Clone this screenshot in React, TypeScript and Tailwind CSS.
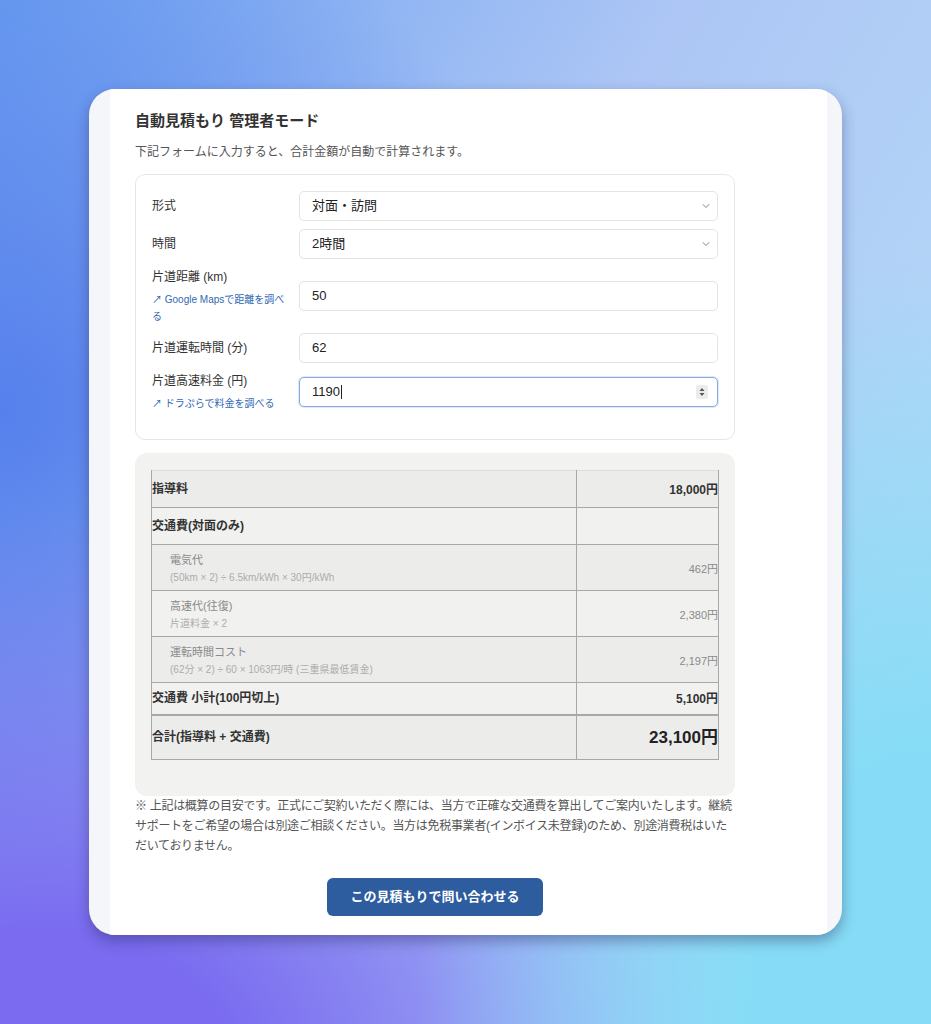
import { ChevronDown } from "lucide-react";

const font = "font-['Liberation_Sans','Noto_Sans_CJK_JP',sans-serif]";

const fields = [
  { label: "形式", kind: "select", value: "対面・訪問" },
  { label: "時間", kind: "select", value: "2時間" },
  { label: "片道距離 (km)", kind: "input", value: "50", link: "↗ Google Mapsで距離を調べる" },
  { label: "片道運転時間 (分)", kind: "input", value: "62" },
  { label: "片道高速料金 (円)", kind: "focus", value: "1190", link: "↗ ドラぷらで料金を調べる" },
];

const rows = [
  { label: "指導料", value: "18,000円", type: "main" },
  { label: "交通費(対面のみ)", value: "", type: "main" },
  { label: "電気代", sub: "(50km × 2) ÷ 6.5km/kWh × 30円/kWh", value: "462円", type: "sub" },
  { label: "高速代(往復)", sub: "片道料金 × 2", value: "2,380円", type: "sub" },
  { label: "運転時間コスト", sub: "(62分 × 2) ÷ 60 × 1063円/時 (三重県最低賃金)", value: "2,197円", type: "sub" },
  { label: "交通費 小計(100円切上)", value: "5,100円", type: "subtotal" },
  { label: "合計(指導料 + 交通費)", value: "23,100円", type: "total" },
];

function Field({ f }: { f: (typeof fields)[number] }) {
  const base =
    "relative h-[30px] w-full rounded-[5px] border bg-white flex items-center pl-3 text-[13px] text-[#222]";
  if (f.kind === "select") {
    return (
      <div className={`${base} pr-[5px] border-[#e3e3e0] justify-between`}>
        <span>{f.value}</span>
        <ChevronDown className="w-3 h-3 text-[#777]" strokeWidth={1.8} />
      </div>
    );
  }
  if (f.kind === "focus") {
    return (
      <div className={`${base} pr-[9px] border-[#86a9de] shadow-[0_0_0_1px_rgba(134,169,222,0.25)] justify-between`}>
        <span className="flex items-center">
          {f.value}
          <span className="ml-[1px] inline-block w-px h-[14px] bg-[#222]" />
        </span>
        <span className="flex items-center justify-center w-[12px] h-[14px] rounded-[2px] bg-[#ececec]">
          <svg width="6" height="10" viewBox="0 0 6 10">
            <path d="M3 1 L5.5 4 H0.5 Z" fill="#555" />
            <path d="M3 9 L5.5 6 H0.5 Z" fill="#555" />
          </svg>
        </span>
      </div>
    );
  }
  return (
    <div className={`${base} pr-3 border-[#e3e3e0]`}>
      <span>{f.value}</span>
    </div>
  );
}

export default function App() {
  return (
    <div
      className={`${font} min-h-[1024px] w-full bg-[radial-gradient(ellipse_55%_75%_at_100%_100%,#86dcf6_0%,#86dcf6_35%,transparent_100%),radial-gradient(ellipse_80%_55%_at_5%_105%,#7a6bf0_0%,#7a6bf0_25%,transparent_100%),radial-gradient(ellipse_60%_55%_at_0%_40%,#5680ec_0%,transparent_100%),linear-gradient(120deg,#6a9ff0_0%,#adc6f5_45%,#b8e1f8_100%)] pt-[89px] pl-[89px]`}
    >
      <div className="w-[753px] h-[846px] rounded-[26px] bg-[#f5f6fa] overflow-hidden flex pl-[21px] pr-[15px] shadow-[0_6px_14px_rgba(40,40,90,0.4)]">
        <div className="flex-1 bg-white pl-[25px] pt-[22px]">
          <div className="w-[600px]">
            <h1 className="text-[15px] font-bold text-[#333] leading-[20px]">自動見積もり 管理者モード</h1>
            <p className="mt-[12px] text-[12px] text-[#555] leading-[18px]">
              下記フォームに入力すると、合計金額が自動で計算されます。
            </p>

            <div className="mt-[13px] rounded-[10px] border border-[#e6e6e3] pt-[16px] pb-[27px] pl-[16px] pr-[16px] flex flex-col gap-2">
              {fields.map((f) => (
                <div key={f.label} className="grid grid-cols-[135px_1fr] gap-x-3 items-center">
                  <div className="text-[12px] text-[#333]">
                    <div className="leading-[20px]">{f.label}</div>
                    {f.link && (
                      <div className="mt-[4px] text-[10px] leading-[17px] text-[#2f68b3]">{f.link}</div>
                    )}
                  </div>
                  <Field f={f} />
                </div>
              ))}
            </div>

            <div className="mt-[13px] rounded-[12px] bg-[#f2f2f1] pt-[17px] pb-[36px] px-[16px]">
              <table className="w-full border-collapse text-[#333]">
                <tbody>
                  {rows.map((r, i) => {
                    const bg = i % 2 === 0 ? "bg-[#ececeb]" : "bg-[#f1f1f0]";
                    const rowBorder =
                      r.type === "subtotal"
                        ? "border-b-2 border-b-[#a8a8a8]"
                        : "border-b border-b-[#a8a8a8]";
                    const h =
                      r.type === "sub" ? "h-[46px]" : r.type === "total" ? "h-[45px]" : r.type === "subtotal" ? "h-[32px]" : "h-[37px]";
                    return (
                      <tr key={r.label} className={`${bg} ${rowBorder} ${h} ${i === 0 ? "border-t border-t-[#dcdcdc]" : ""}`}>
                        <td className="border-l border-l-[#a8a8a8] border-r border-r-[#a8a8a8] w-[425px] p-0 align-middle">
                          {r.type === "sub" ? (
                            <div className="pl-[18px]">
                              <div className="text-[11px] leading-[16px] text-[#8a8a8a]">{r.label}</div>
                              <div className="mt-[3px] text-[10px] leading-[13px] text-[#adadad]">{r.sub}</div>
                            </div>
                          ) : (
                            <div className="text-[12px] font-bold leading-[16px]">{r.label}</div>
                          )}
                        </td>
                        <td className="border-r border-r-[#a8a8a8] p-0 text-right align-middle">
                          {r.type === "sub" ? (
                            <span className="text-[11px] text-[#8a8a8a]">{r.value}</span>
                          ) : r.type === "total" ? (
                            <span className="text-[17px] font-bold text-[#222]">{r.value}</span>
                          ) : (
                            <span className="text-[12px] font-bold">{r.value}</span>
                          )}
                        </td>
                      </tr>
                    );
                  })}
                </tbody>
              </table>
            </div>

            <p className="mt-0 text-[12px] leading-[20px] tracking-[-0.3px] text-[#555]">
              ※ 上記は概算の目安です。正式にご契約いただく際には、当方で正確な交通費を算出してご案内いたします。継続サポートをご希望の場合は別途ご相談ください。当方は免税事業者(インボイス未登録)のため、別途消費税はいただいておりません。
            </p>

            <div className="mt-[22px] flex justify-center">
              <button className="w-[216px] h-[38px] rounded-[6px] bg-[#2d5c9f] text-white text-[13px] font-bold">
                この見積もりで問い合わせる
              </button>
            </div>
          </div>
        </div>
      </div>
    </div>
  );
}
